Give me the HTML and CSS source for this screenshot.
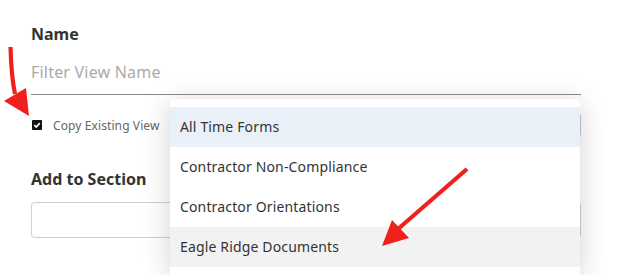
FILE: index.html
```html
<!DOCTYPE html>
<html>
<head>
<meta charset="utf-8">
<link rel="stylesheet" href="styles.css">
</head>
<body>
<div class="page">
  <form class="form">
    <div class="field-label">Name</div>
    <div class="line-input"><span class="placeholder">Filter View Name</span></div>
    <div class="copy-row">
      <span class="checkbox"><svg width="10" height="10" viewBox="0 0 10 10"><path d="M2.3 5.2 L4.2 7 L7.8 3.1" fill="none" stroke="#fff" stroke-width="1.6"/></svg></span>
      <span class="copy-label">Copy Existing View</span>
      <div class="select-box"></div>
    </div>
    <div class="field-label section-label">Add to Section</div>
    <div class="box-input"></div>
  </form>

  <ul class="dropdown">
    <li class="item selected">All Time Forms</li>
    <li class="item">Contractor Non-Compliance</li>
    <li class="item">Contractor Orientations</li>
    <li class="item hover">Eagle Ridge Documents</li>
  </ul>

  <svg class="arrow" width="40" height="125" viewBox="0 0 40 125">
    <path d="M10.5 47 C11 65 12 80 15 94" fill="none" stroke="#f0201c" stroke-width="4.2"/>
    <polygon points="4,101 26,88 29,116" fill="#f0201c"/>
  </svg>
  <svg class="arrow" width="625" height="275" viewBox="0 0 625 275">
    <path d="M467 169 L398 229" fill="none" stroke="#f0201c" stroke-width="4.2"/>
    <polygon points="392,220 409,238 382,246" fill="#f0201c"/>
  </svg>
</div>
</body>
</html>
```

FILE: styles.css
```css
* { box-sizing: border-box; }
html, body {
  margin: 0;
  padding: 0;
  background: #fff;
  overflow: hidden;
}
.page {
  position: relative;
  width: 625px;
  height: 275px;
  overflow: hidden;
  font-family: "Noto Sans", "Open Sans", sans-serif;
  color: #333;
}
.form {
  margin: 0;
  padding: 23px 44px 0 31px;
  display: flex;
  flex-direction: column;
}
.field-label {
  font-size: 16px;
  font-weight: 700;
  line-height: 22px;
  color: #333;
}
.line-input {
  margin-top: 9px;
  height: 41px;
  border-bottom: 1px solid #8a8a8a;
  display: flex;
  align-items: center;
  padding-bottom: 4px;
}
.placeholder {
  font-size: 16px;
  letter-spacing: 0.2px;
  color: #aaa;
}
.copy-row {
  margin-top: 17px;
  height: 26px;
  display: flex;
  align-items: center;
}
.checkbox {
  width: 10px;
  height: 10px;
  margin-left: 1px;
  background: #111;
  border-radius: 1px;
  display: flex;
}
.copy-label {
  margin-left: 11px;
  font-size: 12px;
  letter-spacing: 0.1px;
  color: #666;
}
.select-box {
  margin-left: auto;
  width: 411px;
  height: 26px;
  border: 1px solid #c8c8c8;
  border-radius: 4px;
}
.section-label {
  margin-top: 30px;
}
.box-input {
  margin-top: 12px;
  height: 36px;
  border: 1px solid #d0d0d0;
  border-radius: 4px;
}
.dropdown {
  position: absolute;
  left: 170px;
  top: 99px;
  width: 410px;
  height: 176px;
  margin: 0;
  padding: 8px 0 0;
  list-style: none;
  background: #fff;
  border-radius: 5px 5px 0 0;
  box-shadow: 0 4px 28px rgba(0, 0, 0, 0.18);
}
.item {
  height: 40px;
  padding-left: 10px;
  padding-bottom: 2px;
  display: flex;
  align-items: center;
  font-size: 14px;
  letter-spacing: 0.15px;
  color: #333;
}
.item.selected { background: #e9f0f8; }
.item.hover { background: #f2f2f2; }
.arrow {
  position: absolute;
  left: 0;
  top: 0;
}
```
